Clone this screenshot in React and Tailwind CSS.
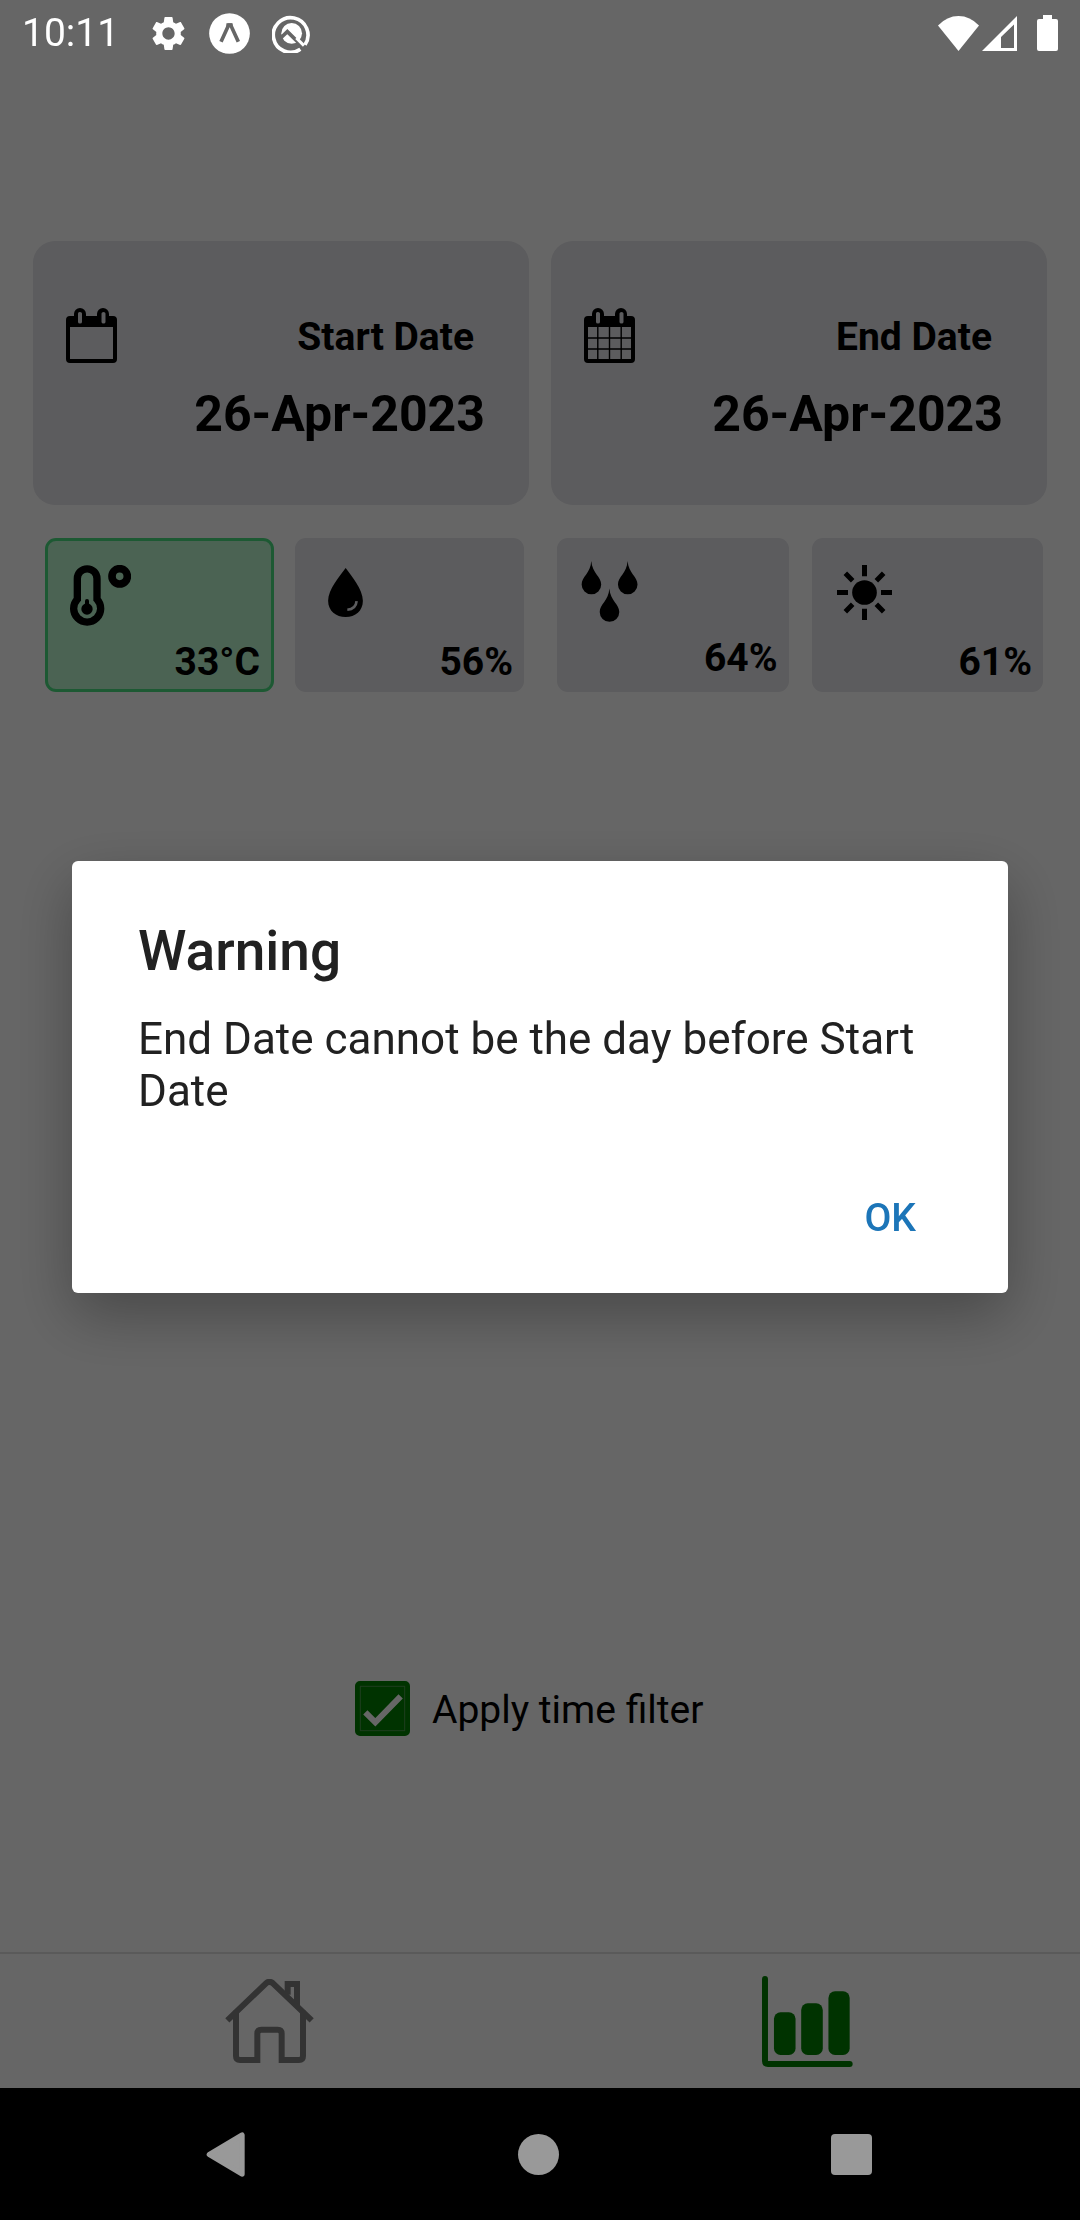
import { useState } from "react";

function CalendarIcon({ grid }) {
  return (
    <svg width="51" height="55" viewBox="0 0 51 55" aria-hidden="true" className="shrink-0">
      <path
        fillRule="evenodd"
        d="M4 8H8V6a6 6 0 0 1 12 0V8H31V6a6 6 0 0 1 12 0V8H47a4 4 0 0 1 4 4V51a4 4 0 0 1-4 4H4a4 4 0 0 1-4-4V12a4 4 0 0 1 4-4ZM4 19V51H47V19ZM13.500 4Q12 4 12 5.500V14Q12 15.500 14 15.500Q16 15.500 16 14V5.500Q16 4 14 4ZM37.500 4Q35.500 4 35.500 5.500V14Q35.500 15.500 37.500 15.500Q39.500 15.500 39.500 14V5.500Q39.500 4 37.500 4Z"
      />
      {grid && <path d="M13.800 19V51M25.500 19V51M37.200 19V51M4 30H47M4 41H47" stroke="black" strokeWidth="1.400" />}
    </svg>
  );
}

function ThermometerIcon() {
  return (
    <svg width="61" height="61" viewBox="120 119 183 183" aria-hidden="true">
      <path
        d="M142 222V160a29.500 29.500 0 0 1 59 0V222a40.500 40.500 0 1 1-59 0Z"
        fill="none"
        stroke="black"
        strokeWidth="22"
      />
      <circle cx="269" cy="153" r="23" fill="none" stroke="black" strokeWidth="23" />
      <circle cx="171" cy="251" r="17" />
      <rect x="165" y="221" width="12" height="24" rx="6" />
    </svg>
  );
}

function DropIcon() {
  return (
    <svg width="35" height="49" viewBox="894 128 105 148" aria-hidden="true">
      <path d="M947 128C965 153 999 192 999 227C999 258 976 276 947 276S894 258 894 227C894 192 929 153 947 128Z" />
      <path d="M952 254Q978 252 980 228" fill="none" stroke="#e5e5ea" strokeWidth="8" />
    </svg>
  );
}

function RainIcon() {
  const drop = "c3 38 30 46 30 71a29.500 29.500 0 0 1-59 0c0-25 27-33 29-71Z";
  return (
    <svg width="57" height="61" viewBox="123 107 171 184" aria-hidden="true">
      <path d={"M153.500 107" + drop} />
      <path d={"M263 107" + drop} />
      <path d={"M208 190" + drop} />
    </svg>
  );
}

function SunIcon() {
  return (
    <svg width="55" height="55" viewBox="0 0 165 165" aria-hidden="true">
      <circle cx="82.500" cy="82.500" r="37" />
      <path
        d="M82.500 0V34M82.500 131V165M0 82.500H33M132 82.500H165M25 25L47 47M118 118L140 140M25 140L47 118M118 47L140 25"
        stroke="black"
        strokeWidth="15"
      />
    </svg>
  );
}

function HomeIcon() {
  return (
    <svg width="89" height="84" viewBox="138 117 267 252" aria-hidden="true" fill="none" stroke="#808080" strokeWidth="18">
      <path d="M145 241L262 129Q271 122 281 129L398 241" />
      <path d="M171 212V348Q171 360 183 360H235V281Q235 269 247 269H296Q308 269 308 281V360H360Q372 360 372 348V212" />
      <path d="M326 164V132H354V196" />
    </svg>
  );
}

function ChartIcon() {
  return (
    <svg width="91" height="91" viewBox="186 104 274 274" aria-hidden="true" fill="#008000">
      <path d="M195 113V360Q195 369 204 369H450" fill="none" stroke="#008000" strokeWidth="18" strokeLinecap="round" />
      <rect x="222" y="213" width="65" height="129" rx="20" />
      <rect x="304" y="186" width="65" height="156" rx="20" />
      <rect x="386" y="150" width="64" height="192" rx="20" />
    </svg>
  );
}

function StatusBar() {
  return (
    <header className="relative z-20 flex h-[66px] items-center justify-between pl-[22px] pr-[22px] text-white">
      <div className="flex items-center">
        <span className="text-[39px] leading-[46px]">10:11</span>
        <svg className="ml-[29px]" width="41" height="41" viewBox="0 0 24 24" fill="white" aria-hidden="true">
          <path d="M19.140 12.940c.04-.3.06-.61.06-.94 0-.32-.02-.64-.07-.94l2.030-1.580c.18-.14.23-.41.12-.61l-1.920-3.320c-.12-.22-.37-.29-.59-.22l-2.390.96c-.5-.38-1.030-.7-1.620-.94l-.36-2.540c-.04-.24-.24-.41-.48-.41h-3.840c-.24 0-.43.17-.47.41l-.36 2.540c-.59.24-1.130.57-1.620.94l-2.390-.96c-.22-.08-.47 0-.59.22L2.740 8.870c-.12.21-.08.47.12.61l2.030 1.580c-.05.3-.09.63-.09.94s.02.64.07.94l-2.030 1.580c-.18.14-.23.41-.12.61l1.920 3.320c.12.22.37.29.59.22l2.390-.96c.5.38 1.030.7 1.620.94l.36 2.540c.05.24.24.41.48.41h3.840c.24 0 .44-.17.47-.41l.36-2.540c.59-.24 1.130-.56 1.620-.94l2.390.96c.22.08.47 0 .59-.22l1.920-3.320c.12-.22.07-.47-.12-.61l-2.010-1.580zM12 15.600c-1.980 0-3.600-1.620-3.600-3.600s1.620-3.600 3.600-3.600 3.600 1.620 3.600 3.600-1.620 3.600-3.600 3.600z" />
        </svg>
        <svg className="ml-[20px]" width="41" height="41" viewBox="0 0 123 123" aria-hidden="true">
          <circle cx="61.500" cy="61.500" r="61" fill="white" />
          <path d="M36 86L59 36H65L88 86" fill="none" stroke="#666" strokeWidth="11" />
          <path d="M52 31H71V42H52Z" fill="#666" />
        </svg>
        <svg className="ml-[22px]" width="39" height="39" viewBox="812 41 117 117" aria-hidden="true" fill="none">
          <path d="M897 147A52 52 0 1 1 911 133" stroke="white" strokeWidth="11" />
          <circle cx="871" cy="99" r="31" fill="white" />
          <path d="M838 113L858 94L905 140" stroke="#666" strokeWidth="11" />
          <path d="M885 113L908 136" stroke="white" strokeWidth="9" />
        </svg>
      </div>
      <div className="flex items-center">
        <svg width="41" height="35" viewBox="0 0 41 35" fill="white" aria-hidden="true">
          <path d="M0 9.500Q9 0 20.500 0T41 9.500L20.500 35Z" />
        </svg>
        <svg className="ml-[3px]" width="35" height="35" viewBox="0 0 35 35" fill="white" aria-hidden="true">
          <path fillRule="evenodd" d="M35 0V35H0ZM32 8.500L19 21V32H32Z" />
        </svg>
        <svg className="ml-[20px]" width="21" height="36" viewBox="0 0 21 36" fill="white" aria-hidden="true">
          <path d="M6 0H15V4H19Q21 4 21 6V34Q21 36 19 36H2Q0 36 0 34V6Q0 4 2 4H6Z" />
        </svg>
      </div>
    </header>
  );
}

function DateCard({ label, date, grid }) {
  return (
    <button
      type="button"
      className="flex h-[264px] flex-1 items-start justify-between rounded-[22px] bg-[#e5e5ea] pl-[33px] pr-[44px] pt-[67px] font-bold"
    >
      <CalendarIcon grid={grid} />
      <span className="mt-[6px] flex flex-col items-end gap-[25px]">
        <span className="pr-[11px] text-[39px] leading-[46px]">{label}</span>
        <span className="text-[50px] leading-[58px]">{date}</span>
      </span>
    </button>
  );
}

const tileBase = "flex h-[154px] flex-col items-stretch justify-between rounded-[11px] font-bold ";

function Tile({ name, value, selected, onSelect, className, children }) {
  return (
    <button
      type="button"
      aria-label={name}
      aria-pressed={selected}
      onClick={onSelect}
      className={
        tileBase + className + (selected ? " border-[3px] border-[#4ade80] bg-[#bbf7d0]" : " bg-[#e5e5ea]")
      }
    >
      {children}
      <span className="text-right text-[39px] leading-[46px]">{value}</span>
    </button>
  );
}

function WarningDialog({ onClose }) {
  return (
    <div className="fixed inset-0 z-10 flex items-center bg-black/60 px-[72px] pb-[132px] pt-[66px]">
      <div
        role="alertdialog"
        aria-labelledby="warning-title"
        aria-describedby="warning-text"
        className="w-full rounded-[6px] bg-white px-[66px] pb-[26px] pt-[58px] text-[#212121] shadow-[0_22px_60px_rgba(0,0,0,0.3)]"
      >
        <h1 id="warning-title" className="text-[55px] font-medium leading-[64px]">Warning</h1>
        <p id="warning-text" className="mt-[30px] text-[44px] leading-[52px]">
          End Date cannot be the day before Start Date
        </p>
        <div className="mt-[51px] flex justify-end">
          <button
            type="button"
            onClick={onClose}
            className="h-[99px] px-[26px] text-[39px] font-medium leading-[46px] text-[#1c75b8]"
          >
            OK
          </button>
        </div>
      </div>
    </div>
  );
}

export default function App() {
  const [open, setOpen] = useState(true);
  const [metric, setMetric] = useState("temperature");
  const [filter, setFilter] = useState(true);

  return (
    <div className="flex min-h-screen flex-col bg-white font-['Roboto',sans-serif] text-black">
      <StatusBar />
      <main className="flex flex-1 flex-col pt-[175px]">
        <div className="flex gap-[22px] px-[33px]">
          <DateCard label="Start Date" date="26-Apr-2023" />
          <DateCard label="End Date" date="26-Apr-2023" grid />
        </div>

        <div className="mt-[33px] flex gap-[33px] pl-[45px] pr-[37px]">
          <div className="grid flex-[479] grid-cols-2 gap-[21px]">
            <Tile
              name="Temperature"
              value="33°C"
              selected={metric === "temperature"}
              onSelect={() => setMetric("temperature")}
              className="pb-[4px] pl-[22px] pr-[11px] pt-[24px]"
            >
              <ThermometerIcon />
            </Tile>
            <Tile
              name="Humidity"
              value="56%"
              selected={metric === "humidity"}
              onSelect={() => setMetric("humidity")}
              className="pb-[7px] pl-[33px] pr-[11px] pt-[30px]"
            >
              <DropIcon />
            </Tile>
          </div>
          <div className="grid flex-[486] grid-cols-2 gap-[23px]">
            <Tile
              name="Rain"
              value="64%"
              selected={metric === "rain"}
              onSelect={() => setMetric("rain")}
              className="pb-[11px] pl-[24px] pr-[11px] pt-[23px]"
            >
              <RainIcon />
            </Tile>
            <Tile
              name="Light"
              value="61%"
              selected={metric === "light"}
              onSelect={() => setMetric("light")}
              className="pb-[7px] pl-[25px] pr-[11px] pt-[27px]"
            >
              <SunIcon />
            </Tile>
          </div>
        </div>

        <label className="mb-[216px] ml-[355px] mt-auto flex items-center self-start">
          <span className="relative flex">
            <input
              type="checkbox"
              checked={filter}
              onChange={(e) => setFilter(e.target.checked)}
              className="size-[55px] appearance-none rounded-[5px] border-[5px] border-[#008000] checked:bg-[#008000]"
            />
            {filter && (
              <svg className="pointer-events-none absolute inset-0" width="55" height="55" viewBox="75 63 165 165" fill="none" aria-hidden="true">
                <rect x="91" y="79" width="133" height="133" stroke="#4d994d" strokeWidth="3" />
                <path d="M106 157L136 187L212 109" stroke="white" strokeWidth="18" />
              </svg>
            )}
          </span>
          <span className="pl-[22px] pt-[2px] text-[39px] leading-[46px]">Apply time filter</span>
        </label>
      </main>

      <nav className="flex h-[136px] border-t-2 border-[#e0e0e0]">
        <a href="#home" aria-label="Home" className="flex flex-1 items-center justify-center">
          <HomeIcon />
        </a>
        <a href="#stats" aria-label="Statistics" className="flex flex-1 items-center justify-center pr-[4px]">
          <ChartIcon />
        </a>
      </nav>

      <footer className="relative z-20 flex h-[132px] items-center justify-between bg-black pl-[206px] pr-[208px]">
        <button type="button" aria-label="Back">
          <svg width="39" height="45" viewBox="78 576 118 134" aria-hidden="true">
            <path d="M88 643L187 584V702Z" fill="#999" stroke="#999" strokeWidth="16" strokeLinejoin="round" />
          </svg>
        </button>
        <button type="button" aria-label="Home screen" className="size-[41px] rounded-full bg-[#999]" />
        <button type="button" aria-label="Recent apps" className="size-[41px] rounded-[4px] bg-[#999]" />
      </footer>

      {open && <WarningDialog onClose={() => setOpen(false)} />}
    </div>
  );
}
